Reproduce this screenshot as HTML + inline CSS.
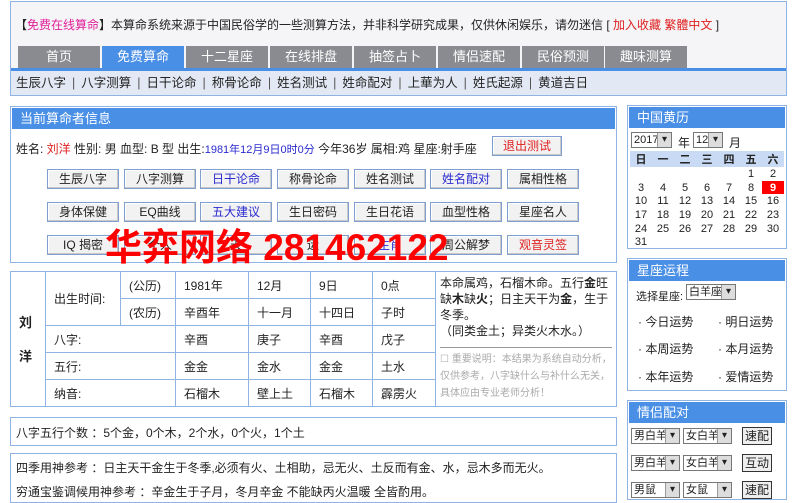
<!DOCTYPE html>
<html><head><meta charset="utf-8"><style>
*{margin:0;padding:0;box-sizing:border-box}
body{width:800px;height:495px;overflow:hidden;background:#fff;font-family:"Liberation Sans","Noto Sans CJK SC",sans-serif;font-size:12px;color:#222;position:relative}
.a{position:absolute;white-space:nowrap}
.box{position:absolute;border:1px solid #8fb4e3;background:#fff}
.hd{position:absolute;left:1px;right:1px;top:1px;height:21px;background:#4a8fe6;color:#fff;font-size:13px;line-height:21px;padding-left:8px}
.tab{position:absolute;top:46px;width:82px;height:22px;background:#8a8b90;color:#fff;font-size:13px;text-align:center;line-height:22px}
.btn{position:absolute;width:72px;height:20px;border:1px solid #7e9fd0;background:#f2f2f2;text-align:center;line-height:18px;font-size:12px;box-shadow:inset -1px -1px 0 #c8c8c8,inset 1px 1px 0 #fff}
.bl{color:#2a2ad0}.rd{color:#e02020}
table{border-collapse:collapse}
td{border:1px solid #8fb4e3;padding-left:8px;font-size:12px}
.cal td{border:none;padding:0;text-align:center;width:22px;height:13.7px;font-size:11px}
.sel{position:absolute;height:16px;border:1px solid #777;background:#fff;font-size:11px;line-height:14px;padding-left:2px;overflow:hidden}
.sel:after{content:"▾";position:absolute;right:0;top:0;width:13px;height:14px;background:#ddd;border-left:1px solid #999;text-align:center;font-size:10px}
.sb{position:absolute;width:30px;height:18px;border:1px solid #333;background:#eee;text-align:center;line-height:16px;font-size:12px}
.sn span{margin:0 6px;color:#555}
</style></head><body>
<div class="box" style="left:10px;top:1px;width:777px;height:95px;background:#f5f5f7"></div>
<div class="a" style="left:15px;top:16px;font-size:12px">【<span style="color:#e0209a">免费在线算命</span>】本算命系统来源于中国民俗学的一些测算方法，并非科学研究成果，仅供休闲娱乐，请勿迷信 [ <span class="rd">加入收藏 繁體中文</span> ]</div>
<div class="tab" style="left:18px">首页</div>
<div class="tab" style="left:102px;background:#4a8fe6">免费算命</div>
<div class="tab" style="left:186px">十二星座</div>
<div class="tab" style="left:270px">在线排盘</div>
<div class="tab" style="left:354px">抽签占卜</div>
<div class="tab" style="left:438px">情侣速配</div>
<div class="tab" style="left:522px">民俗预测</div>
<div class="tab" style="left:605px">趣味测算</div>
<div class="a" style="left:11px;top:68px;width:775px;height:3px;background:#4a8fe6"></div>
<div class="a" style="left:11px;top:71px;width:775px;height:24px;background:#e3e9f4"></div>
<div class="a sn" style="left:16px;top:74px;font-size:12.5px;line-height:18px">生辰八字<span>|</span>八字测算<span>|</span>日干论命<span>|</span>称骨论命<span>|</span>姓名测试<span>|</span>姓命配对<span>|</span>上華为人<span>|</span>姓氏起源<span>|</span>黄道吉日</div>

<div class="box" style="left:10px;top:106px;width:607px;height:157px"><div class="hd">当前算命者信息</div></div>
<div class="a" style="left:16px;top:140px">姓名: <span class="rd">刘洋</span> 性别: 男 血型: B 型 出生:<span class="bl" style="font-size:11px">1981年12月9日0时0分</span> 今年36岁 属相:鸡 星座:射手座</div>
<div class="btn rd" style="left:492px;top:136px;width:70px">退出测试</div>
<div class="btn" style="left:47px;top:169px">生辰八字</div><div class="btn" style="left:124px;top:169px">八字测算</div><div class="btn bl" style="left:200px;top:169px">日干论命</div><div class="btn" style="left:277px;top:169px">称骨论命</div><div class="btn" style="left:354px;top:169px">姓名测试</div><div class="btn bl" style="left:430px;top:169px">姓名配对</div><div class="btn" style="left:507px;top:169px">属相性格</div>
<div class="btn" style="left:47px;top:202px">身体保健</div><div class="btn" style="left:124px;top:202px">EQ曲线</div><div class="btn bl" style="left:200px;top:202px">五大建议</div><div class="btn" style="left:277px;top:202px">生日密码</div><div class="btn" style="left:354px;top:202px">生日花语</div><div class="btn" style="left:430px;top:202px">血型性格</div><div class="btn" style="left:507px;top:202px">星座名人</div>
<div class="btn" style="left:47px;top:235px">IQ 揭密</div><div class="btn" style="left:124px;top:235px">个人</div><div class="btn" style="left:200px;top:235px">天</div><div class="btn" style="left:277px;top:235px">运</div><div class="btn bl" style="left:354px;top:235px">生肖</div><div class="btn" style="left:430px;top:235px">周公解梦</div><div class="btn rd" style="left:507px;top:235px">观音灵签</div>
<div class="a" style="left:105px;top:226px;font-size:37px;font-weight:bold;color:#f00;line-height:44px">华弈网络 281462122</div>

<table class="a" style="left:10px;top:271px;width:607px">
<tr style="height:27px"><td rowspan="5" style="width:35px;font-weight:bold;font-size:13px;padding-left:8px;line-height:17px">刘<br><br>洋</td><td rowspan="2" style="width:75px">出生时间:</td><td style="width:55px">(公历)</td><td style="width:73px">1981年</td><td style="width:62px">12月</td><td style="width:62px">9日</td><td style="width:63px">0点</td><td rowspan="5" style="vertical-align:top;padding:3px 4px;white-space:normal;line-height:16px;font-size:12px">本命属鸡，石榴木命。五行<b>金</b>旺缺<b>木</b>缺<b>火</b>；日主天干为<b>金</b>，生于冬季。<br>（同类金土；异类火木水。）<div style="border-top:1px solid #999;margin-top:8px;padding-top:3px;color:#aaa;font-size:10px;line-height:17px">☐ 重要说明：本结果为系统自动分析，仅供参考，八字缺什么与补什么无关，具体应由专业老师分析！</div></td></tr>
<tr style="height:27px"><td>(农历)</td><td>辛酉年</td><td>十一月</td><td>十四日</td><td>子时</td></tr>
<tr style="height:27px"><td colspan="2">八字:</td><td>辛酉</td><td>庚子</td><td>辛酉</td><td>戊子</td></tr>
<tr style="height:27px"><td colspan="2">五行:</td><td>金金</td><td>金水</td><td>金金</td><td>土水</td></tr>
<tr style="height:27px"><td colspan="2">纳音:</td><td>石榴木</td><td>壁上土</td><td>石榴木</td><td>霹雳火</td></tr>
</table>

<div class="box" style="left:10px;top:417px;width:607px;height:29px"></div>
<div class="a" style="left:16px;top:424px">八字五行个数 ：5个金，0个木，2个水，0个火，1个土</div>
<div class="box" style="left:10px;top:453px;width:607px;height:50px"></div>
<div class="a" style="left:16px;top:459px">四季用神参考 ：日主天干金生于冬季,必须有火、土相助，忌无火、土反而有金、水，忌木多而无火。</div>
<div class="a" style="left:16px;top:483px">穷通宝鉴调候用神参考 ：辛金生于子月，冬月辛金 不能缺丙火温暖 全皆酌用。</div>

<div class="box" style="left:627px;top:105px;width:160px;height:144px"><div class="hd">中国黄历</div></div>
<div class="sel" style="left:631px;top:132px;width:41px">2017</div><div class="a" style="left:678px;top:134px">年</div>
<div class="sel" style="left:693px;top:132px;width:30px">12</div><div class="a" style="left:729px;top:134px">月</div>
<table class="a cal" style="left:630px;top:151px;width:154px">
<tr style="background:#c8daf4;font-weight:bold;font-size:12px"><td>日</td><td>一</td><td>二</td><td>三</td><td>四</td><td>五</td><td>六</td></tr>
<tr><td></td><td></td><td></td><td></td><td></td><td>1</td><td>2</td></tr>
<tr><td>3</td><td>4</td><td>5</td><td>6</td><td>7</td><td>8</td><td style="background:#f00;color:#fff;font-weight:bold">9</td></tr>
<tr><td>10</td><td>11</td><td>12</td><td>13</td><td>14</td><td>15</td><td>16</td></tr>
<tr><td>17</td><td>18</td><td>19</td><td>20</td><td>21</td><td>22</td><td>23</td></tr>
<tr><td>24</td><td>25</td><td>26</td><td>27</td><td>28</td><td>29</td><td>30</td></tr>
<tr><td>31</td><td></td><td></td><td></td><td></td><td></td><td></td></tr>
</table>

<div class="box" style="left:627px;top:258px;width:160px;height:133px"><div class="hd">星座运程</div></div>
<div class="a" style="left:636px;top:288px;font-size:11px">选择星座:</div><div class="sel" style="left:686px;top:284px;width:50px">白羊座</div>
<div class="a" style="left:638px;top:313px">· 今日运势</div><div class="a" style="left:718px;top:313px">· 明日运势</div>
<div class="a" style="left:638px;top:340px">· 本周运势</div><div class="a" style="left:718px;top:340px">· 本月运势</div>
<div class="a" style="left:638px;top:368px">· 本年运势</div><div class="a" style="left:718px;top:368px">· 爱情运势</div>

<div class="box" style="left:627px;top:400px;width:160px;height:100px"><div class="hd">情侣配对</div></div>
<div class="sel" style="left:631px;top:428px;width:49px">男白羊</div><div class="sel" style="left:683px;top:428px;width:49px">女白羊</div><div class="sb" style="left:742px;top:427px">速配</div>
<div class="sel" style="left:631px;top:455px;width:49px">男白羊</div><div class="sel" style="left:683px;top:455px;width:49px">女白羊</div><div class="sb" style="left:742px;top:454px">互动</div>
<div class="sel" style="left:631px;top:482px;width:49px">男鼠</div><div class="sel" style="left:683px;top:482px;width:49px">女鼠</div><div class="sb" style="left:742px;top:481px">速配</div>
</body></html>
